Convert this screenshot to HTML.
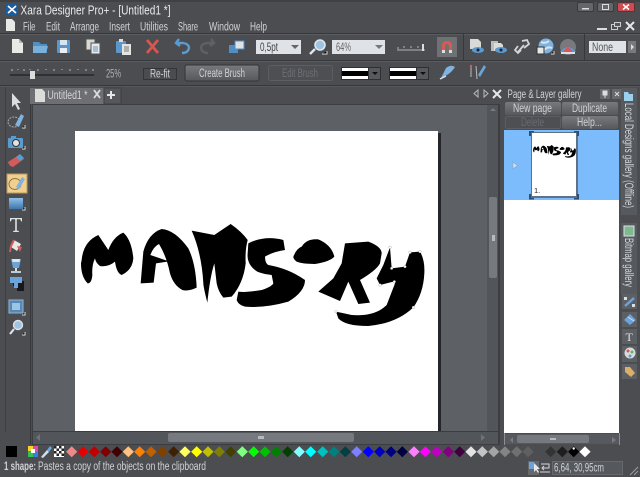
<!DOCTYPE html>
<html><head><meta charset="utf-8"><title>Xara Designer Pro+</title>
<style>
html,body{margin:0;padding:0;background:#4b4d51;overflow:hidden}
svg{display:block}
text{font-family:"Liberation Sans",sans-serif;fill:#d0d3d6;font-size:11.5px}
</style></head><body>
<svg width="640" height="477" viewBox="0 0 640 477" xmlns="http://www.w3.org/2000/svg">
<defs>
<g id="logo" fill="#000" transform="translate(75 220) scale(.33333)">
<path d="M20 120Q25 65 70 45L100 90Q115 50 145 38Q170 60 175 115Q172 150 140 165Q125 160 120 125Q100 142 75 138Q62 128 60 115Q50 135 52 165Q50 190 38 190Q18 170 18 130Z"/>
<path d="M197 190L205 95Q220 40 260 27Q300 30 340 85Q362 130 365 203Q340 215 322 210Q295 195 285 160Q275 110 252 72Q235 80 226 105L282 124L243 130L236 188Z"/>
<path d="M350 32L418 45Q440 30 467 12Q500 35 518 60Q510 90 512 130Q505 190 470 230L445 233Q430 215 425 190L418 130Q405 170 397 248Q385 200 385 190Q380 100 350 32Z"/>
<path d="M520 70Q570 45 625 60L630 90Q595 95 570 110Q570 130 580 135Q640 145 690 180Q690 215 640 245Q570 265 510 260Q490 255 485 240L490 215Q515 218 560 210Q590 200 595 190L590 165Q550 160 540 150Q515 130 518 100Z"/>
<path d="M655 110Q665 85 680 80Q695 55 730 58Q770 75 778 110Q765 125 720 132Q680 132 665 125Q655 118 655 110Z"/>
<path d="M810 70L880 65Q920 80 920 100L915 130Q905 150 855 180L885 248L850 252L820 185L795 243L730 215L775 175L800 130Z"/>
<path d="M783 275L830 285Q900 290 935 255L960 190L955 185L915 195L905 175L925 135L945 82L950 145L990 140L1005 97L1035 95Q1050 120 1048 160Q1045 220 1015 262Q965 310 880 318Q810 318 790 295Z"/>
</g>
<polygon id="d" points="0,-5.5 5.6,0 0,5.5 -5.6,0"/>
<linearGradient id="btn" x1="0" y1="0" x2="0" y2="1"><stop offset="0" stop-color="#77797d"/><stop offset="1" stop-color="#56585c"/></linearGradient>
<linearGradient id="bl" x1="0" y1="0" x2="0" y2="1"><stop offset="0" stop-color="#8fbfe8"/><stop offset="1" stop-color="#3f77ad"/></linearGradient>
</defs>

<!-- chrome -->
<rect width="640" height="477" fill="#4b4d51"/>
<rect width="640" height="2" fill="#3f4144"/>
<rect y="33" width="640" height="1" fill="#37383b"/><rect y="34" width="640" height="1" fill="#5a5c60"/>
<rect y="60" width="640" height="1" fill="#37383b"/><rect y="61" width="640" height="1" fill="#5a5c60"/>
<rect y="85" width="640" height="1" fill="#37383b"/><rect y="86" width="640" height="1" fill="#55575b"/>

<!-- title -->
<rect x="6" y="4" width="12" height="11" rx="1" fill="#1c5c9c"/>
<path d="M8 6L16 13M16 6L8 13" stroke="#fff" stroke-width="1.6"/>
<text x="20.500" y="14.500" textLength="150" lengthAdjust="spacingAndGlyphs" style="font-size:13px;fill:#e8eaec">Xara Designer Pro+ - [Untitled1 *]</text>
<rect x="577.500" y="2.500" width="16" height="9" rx="1.500" fill="#64666a" stroke="#393a3d"/><rect x="582" y="8" width="7" height="1.500" fill="#ddd"/>
<rect x="597.500" y="2.500" width="16" height="9" rx="1.500" fill="#64666a" stroke="#393a3d"/><rect x="602.500" y="4.500" width="6" height="5" fill="none" stroke="#ddd"/>
<rect x="617.500" y="2.500" width="17" height="9" rx="1.500" fill="#d04a52" stroke="#5d3336"/><path d="M623 4.500L629 9.500M629 4.500L623 9.500" stroke="#fff" stroke-width="1.500"/>

<!-- menu -->
<path d="M6 19H12L15 22V31H6Z" fill="#e8e8e6"/>
<g>
<text x="23" y="30.500" textLength="12.500" lengthAdjust="spacingAndGlyphs">File</text>
<text x="46" y="30.500" textLength="14" lengthAdjust="spacingAndGlyphs">Edit</text>
<text x="70" y="30.500" textLength="29" lengthAdjust="spacingAndGlyphs">Arrange</text>
<text x="109" y="30.500" textLength="21" lengthAdjust="spacingAndGlyphs">Insert</text>
<text x="140" y="30.500" textLength="28" lengthAdjust="spacingAndGlyphs">Utilities</text>
<text x="178" y="30.500" textLength="20" lengthAdjust="spacingAndGlyphs">Share</text>
<text x="209" y="30.500" textLength="31" lengthAdjust="spacingAndGlyphs">Window</text>
<text x="250" y="30.500" textLength="17" lengthAdjust="spacingAndGlyphs">Help</text>
</g>
<rect x="597" y="28" width="10" height="2" fill="#ddd"/>
<rect x="611.500" y="24.500" width="6" height="5" fill="none" stroke="#ccc"/><rect x="614.500" y="22.500" width="6" height="4" fill="#55575b" stroke="#ccc"/>
<path d="M626 22L634 30M634 22L626 30" stroke="#e6e6e6" stroke-width="2"/>

<!-- toolbar 1 -->
<path d="M12 39H19L23 43V53H12Z" fill="#e9e9e6"/><path d="M19 39V43H23" fill="#b9b9b6"/>
<path d="M33 42H39L41 44H47V53H33Z" fill="#4f8fc4"/><path d="M33 46H48L46 53H33Z" fill="#7ab1dc"/>
<rect x="57" y="40" width="13" height="13" rx="1" fill="#5b97cb"/><rect x="60" y="40" width="7" height="5" fill="#d8e4ee"/><rect x="60" y="48" width="7" height="5" fill="#e8eef2"/>
<rect x="86" y="39" width="9" height="11" fill="#d8d8d6" stroke="#555"/><rect x="91" y="43" width="9" height="11" fill="#e8e8e6" stroke="#555"/><path d="M93 47H98M93 49H98M93 51H98" stroke="#5b97cb"/>
<rect x="116" y="41" width="10" height="12" rx="1" fill="#5b97cb"/><rect x="119" y="39" width="4" height="3" fill="#ddd"/><rect x="122" y="44" width="9" height="11" fill="#e4e4e2"/><path d="M124 47H129M124 49H129M124 51H129" stroke="#777"/>
<path d="M147 40L158 53M158 40L147 53" stroke="#d9564e" stroke-width="2.800"/>
<path d="M179 39L176 43L180 46M177 43H183Q189 44 189 48Q188 53 182 53" fill="none" stroke="#5a9bd0" stroke-width="2.400"/>
<path d="M211 39L214 43L210 46M213 43H207Q201 44 201 48Q202 53 208 53" fill="none" stroke="#5e6064" stroke-width="2.400"/>
<rect x="229" y="45" width="9" height="8" fill="#4f8fc4"/><rect x="235" y="41" width="9" height="8" fill="#dfe3e6" stroke="#4f8fc4"/>
<rect x="256" y="40" width="45" height="14" fill="#dfe3e7"/><text x="260" y="51" textLength="18" lengthAdjust="spacingAndGlyphs" style="fill:#444">0,5pt</text><path d="M291 45H299L295 49Z" fill="#666"/>
<circle cx="320" cy="45" r="5" fill="#9cc5e5" stroke="#e0e6ea" stroke-width="1.600"/><path d="M315 49L310 54" stroke="#e0e6ea" stroke-width="2.400"/><path d="M322 54H327V51" stroke="#ddd"/>
<rect x="332" y="40" width="53" height="14" fill="#dfe3e7"/><text x="336" y="51" textLength="15" lengthAdjust="spacingAndGlyphs" style="fill:#666">64%</text><path d="M375 45H383L379 49Z" fill="#777"/>
<path d="M397 50H425M398 47V49M404 46V48M411 46V48M418 46V48" stroke="#b2b5b8"/><rect x="422" y="44" width="2" height="7" fill="#ddd"/>
<rect x="437" y="37" width="20" height="20" fill="#6f7175"/>
<path d="M442 53V46Q442 41 447 41Q452 41 452 46V53H449V46Q449 44 447 44Q445 44 445 46V53Z" fill="#d85b52"/><rect x="442" y="50" width="3" height="3" fill="#ddd"/><rect x="449" y="50" width="3" height="3" fill="#ddd"/>
<rect x="463" y="34" width="1" height="26" fill="#37383b"/>
<path d="M470 39H478L481 42V49H470Z" fill="#d9d9d7"/><ellipse cx="478" cy="50" rx="6" ry="3" fill="#5a9bd0"/><circle cx="478" cy="50" r="1.500" fill="#223"/>
<path d="M491 41H498V51H491Z" fill="#bdbdbb"/><path d="M494 43H501L503 45V51H494Z" fill="#dcdcda"/><ellipse cx="501" cy="50" rx="6" ry="3" fill="#5a9bd0"/><circle cx="501" cy="50" r="1.500" fill="#223"/>
<path d="M518 52L524 45M522 41L527 40L529 44L524 48M518 46L515 50L518 53L521 50" fill="none" stroke="#d3d6d9" stroke-width="1.800"/>
<circle cx="546" cy="46" r="7.500" fill="#7fb2de"/><path d="M541 42Q545 44 549 41M544 50Q548 46 552 48" stroke="#d9e6f0" fill="none" stroke-width="2"/><rect x="537" y="47" width="7" height="7" fill="#e8e8e8" stroke="#333"/><path d="M551 54H554V51" stroke="#ddd"/>
<circle cx="568" cy="47" r="8" fill="#77797d"/><path d="M560 52Q568 42 576 52Z" fill="#5a9bd0"/><path d="M563 52L568 46L573 52" fill="#d8555a"/><rect x="561" y="52" width="14" height="2" fill="#ddd"/>
<rect x="584" y="34" width="1" height="26" fill="#37383b"/>
<rect x="589" y="41" width="37" height="12" fill="#dfe3e7"/><text x="592" y="51" textLength="21" lengthAdjust="spacingAndGlyphs" style="fill:#555">None</text>
<rect x="628" y="41" width="8" height="12" fill="#77797d"/><path d="M631 44L634 47L631 50Z" fill="#ddd"/>

<!-- toolbar 2 -->
<path d="M12 69V71M18 69V70M24 69V71M30 69V70M38 69V71M46 69V70M54 69V71M62 69V70M70 69V71M78 69V70M86 69V71M93 69V71" stroke="#b5b8bb"/>
<rect x="10" y="74" width="84" height="2" fill="#2f3033"/><path d="M30 71H35V79H30Z" fill="#dcdcda"/>
<text x="106" y="77.500" textLength="15" lengthAdjust="spacingAndGlyphs" style="fill:#aeb1b5">25%</text>
<rect x="143.500" y="68.500" width="33" height="11" fill="#4a4c50" stroke="#333538"/><text x="150" y="77.500" textLength="20" lengthAdjust="spacingAndGlyphs">Re-fit</text>
<rect x="185" y="65" width="74" height="16" rx="2" fill="url(#btn)" stroke="#333538"/><text x="199" y="77" textLength="46" lengthAdjust="spacingAndGlyphs">Create Brush</text>
<rect x="268.500" y="65.500" width="64" height="15" rx="2" fill="#4d4f53" stroke="#5c5e62"/><text x="282" y="77" textLength="36" lengthAdjust="spacingAndGlyphs" style="fill:#6d7074">Edit Brush</text>
<rect x="341" y="67" width="40" height="13" fill="#2e2f32"/><rect x="342" y="68" width="26" height="11" fill="#fff"/><rect x="342" y="71" width="26" height="5" fill="#000"/><rect x="369" y="68" width="11" height="11" fill="#57595d"/><path d="M372 72H378L375 75Z" fill="#111"/>
<rect x="389" y="67" width="40" height="13" fill="#2e2f32"/><rect x="390" y="68" width="26" height="11" fill="#fff"/><rect x="390" y="71" width="26" height="5" fill="#000"/><rect x="417" y="68" width="11" height="11" fill="#57595d"/><path d="M420 72H426L423 75Z" fill="#111"/>
<path d="M441 78L446 68Q451 64 455 67Q452 72 447 75Z" fill="#7fb2de"/><path d="M440 79L446 76" stroke="#dde" stroke-width="1.500"/>
<path d="M471 66V77M476 66L477 79" stroke="#bbb"/><circle cx="471" cy="66" r="1.200" fill="#d85b52"/><path d="M478 75L484 65L486 67L480 77Z" fill="#6aa4da"/>

<!-- left toolbar -->
<rect x="5" y="87" width="1" height="345" fill="#3d3f42"/>
<path d="M12 93L12 107L15 104L18 110L20 109L17 103L21 103Z" fill="#dcdde0"/>
<ellipse cx="14" cy="122" rx="6" ry="5" fill="none" stroke="#aaa" stroke-dasharray="2 1"/><path d="M15 125L21 114L24 116L19 127Z" fill="#7fb2de"/><path d="M22 128H25V125" stroke="#ddd"/>
<rect x="8" y="138" width="15" height="10" rx="1" fill="#5a9bd0"/><rect x="11" y="136" width="5" height="3" fill="#5a9bd0"/><circle cx="16" cy="143" r="3.500" fill="#dfe3e6" stroke="#333"/><path d="M22 149H25V146" stroke="#ddd"/>
<path d="M8 162L19 155L24 159L13 167Q9 166 8 162Z" fill="#d55a5a"/><path d="M16 157L20 154L24 158L20 161Z" fill="#5a9bd0"/>
<rect x="7" y="174" width="20" height="19" fill="#f1d08f" stroke="#b89a5e"/>
<ellipse cx="15" cy="184" rx="6" ry="5.500" fill="none" stroke="#8b7a50"/><path d="M16 187L22 177L25 179L19 189Z" fill="#7fb2de"/>
<rect x="9" y="198" width="14" height="11" fill="url(#bl)"/><path d="M22 210H25V207" stroke="#ddd"/>
<path d="M10 218H22V221.500H21.200L20.300 219.300H16.800V230.800H18.800V232H13.200V230.800H15.200V219.300H11.700L10.800 221.500H10Z" fill="#e0e2e4"/>
<path d="M14 240L21 244L17 251L11 247Z" fill="#e8e8e6"/><path d="M14 240L11 246L10 252" fill="none" stroke="#d55a5a" stroke-width="2"/><path d="M17 246L22 247L20 252Z" fill="#d55a5a"/>
<path d="M11 259H21L19 268H13Z" fill="#6aa4da"/><path d="M12 259H20L19.500 262H12.500Z" fill="#dfe3e6"/><rect x="15" y="268" width="2" height="4" fill="#ddd"/><rect x="11" y="271" width="10" height="2" fill="#bcd"/>
<path d="M13 281H24V291H17V286H13Z" fill="#16181c"/><path d="M10 277H22V283H18V288H14V283H10Z" fill="#6aa4da"/>
<rect x="9" y="300" width="14" height="13" fill="#5a87b0" stroke="#8fb4d6"/><rect x="12" y="303" width="8" height="7" fill="#9cc5e5"/><path d="M22 315H25V312" stroke="#ddd"/>
<circle cx="18" cy="325" r="4.500" fill="#9cc5e5" stroke="#e0e2e4" stroke-width="1.400"/><path d="M14 329L10 334" stroke="#e0e2e4" stroke-width="2.200"/><path d="M22 335H25V332" stroke="#ddd"/>

<!-- document frame -->
<rect x="30" y="104" width="1" height="340" fill="#37383b"/>
<rect x="30" y="88" width="74" height="16" fill="#6d6f73"/>
<path d="M35 89H42L45 92V102H35Z" fill="#dcdcda"/>
<text x="47.500" y="99" textLength="40" lengthAdjust="spacingAndGlyphs" style="fill:#d4d6d8">Untitled1 *</text>
<path d="M94 90L100 98M100 90L94 98" stroke="#dcdde0" stroke-width="1.800"/>
<rect x="104" y="88" width="17" height="16" fill="#55575b" stroke="#3d3f42"/><path d="M111 91V99M107 95H115" stroke="#e6e6e6" stroke-width="2"/>
<path d="M478 90L474 93.500L478 97Z" fill="none" stroke="#b8babd"/><path d="M484 90L488 93.500L484 97Z" fill="none" stroke="#b8babd"/>
<path d="M493 90L501 98M501 90L493 98" stroke="#e6e6e6" stroke-width="2"/>

<!-- canvas -->
<rect x="32" y="104" width="468" height="341" fill="#3c3d40"/>
<rect x="33" y="105" width="454" height="326" fill="#5d6064"/>
<rect x="75" y="131" width="363" height="300" fill="#fff"/>
<rect x="438" y="133" width="3" height="298" fill="#24252a"/>
<use href="#logo"/>
<g fill="#fff" stroke="#444" stroke-width=".6" transform="translate(75 220) scale(.33333)"><circle cx="945" cy="82" r="4"/><circle cx="1005" cy="97" r="4"/><circle cx="1035" cy="95" r="4"/><circle cx="950" cy="145" r="4"/><circle cx="990" cy="140" r="4"/><circle cx="915" cy="195" r="4"/><circle cx="958" cy="185" r="4"/><circle cx="1015" cy="262" r="4"/><circle cx="783" cy="275" r="4"/></g>

<!-- v scrollbar -->
<rect x="487" y="105" width="11" height="326" fill="#525559"/>
<path d="M490 111H496L493 108Z" fill="#777a7e"/>
<rect x="489" y="197" width="8" height="81" rx="2" fill="#76797d"/>
<rect x="492" y="235" width="3" height="6" fill="#b7babd"/>
<!-- h scrollbar -->
<rect x="33" y="432" width="465" height="12" fill="#525559"/>
<path d="M40 434V441L36 437.500Z" fill="#6f7276"/>
<path d="M481 434V441L485 437.500Z" fill="#6f7276"/>
<rect x="168" y="433" width="186" height="9" rx="2" fill="#76797d"/>
<rect x="258" y="436" width="6" height="3" fill="#b7babd"/>

<!-- gallery -->
<text x="507.500" y="98" textLength="74" lengthAdjust="spacingAndGlyphs">Page &amp; Layer gallery</text>
<rect x="600" y="89" width="10" height="10" fill="#66686c"/><path d="M603 91H607V95H603ZM605 95V98" stroke="#ddd" fill="#ddd"/>
<rect x="612" y="89" width="10" height="10" fill="#66686c"/><path d="M615 92L619 96M619 92L615 96" stroke="#ddd"/>
<rect x="505" y="102" width="56" height="13" rx="2" fill="url(#btn)"/><text x="513" y="112" textLength="39" lengthAdjust="spacingAndGlyphs">New  page</text>
<rect x="562" y="102" width="56" height="13" rx="2" fill="url(#btn)"/><text x="572" y="112" textLength="35" lengthAdjust="spacingAndGlyphs">Duplicate</text>
<rect x="505.500" y="116.500" width="55" height="12" rx="2" fill="#4d4f53" stroke="#5c5e62"/><text x="521" y="126" textLength="23" lengthAdjust="spacingAndGlyphs" style="fill:#686b6f">Delete</text>
<rect x="562" y="116" width="56" height="13" rx="2" fill="url(#btn)"/><text x="577" y="126" textLength="25" lengthAdjust="spacingAndGlyphs">Help...</text>
<rect x="504" y="130" width="115" height="303" fill="#fff"/>
<rect x="504" y="130" width="115" height="70" fill="#7dbcfc"/>
<path d="M513 162V169L517.500 165.500Z" fill="#cfe2f2" stroke="#8aa0b5" stroke-width=".6"/>
<rect x="531" y="132" width="47" height="66" fill="#5d7188"/>
<rect x="532" y="133" width="44" height="63" fill="#fff"/>
<use href="#logo" transform="translate(522.900 117) scale(.125)"/>
<text x="534" y="193" style="font-size:7.500px;fill:#222">1.</text>
<g fill="#2d4f78"><rect x="529" y="131" width="2" height="5"/><rect x="529" y="131" width="5" height="1.500"/><rect x="577" y="131" width="2" height="5"/><rect x="574" y="131" width="5" height="1.500"/><rect x="529" y="194" width="2" height="5"/><rect x="529" y="198" width="5" height="1.500"/><rect x="577" y="194" width="2" height="5"/><rect x="574" y="198" width="5" height="1.500"/></g>
<rect x="504" y="433" width="1" height="12" fill="#8c8e92"/><rect x="619" y="433" width="1" height="12" fill="#8c8e92"/>
<rect x="505" y="434" width="114" height="10" fill="#56595d"/>
<path d="M513 437V443L510 440Z" fill="#7a7d81"/><path d="M612 437V443L616 440Z" fill="#7a7d81"/>
<rect x="517" y="435" width="72" height="8" rx="2" fill="#76797d"/><rect x="550" y="438" width="6" height="2" fill="#b7babd"/>

<!-- right side tabs -->
<rect x="621" y="88" width="16" height="127" fill="#565a5e"/>
<path d="M624 92H628L629 94H633V101H624Z" fill="#9ad0ee"/>
<text transform="translate(625 103) rotate(90)" textLength="105" lengthAdjust="spacingAndGlyphs" style="fill:#d6d8da">Local Designs gallery (Offline)</text>
<rect x="621" y="223" width="16" height="72" fill="#565a5e"/>
<rect x="624" y="226" width="10" height="10" fill="#7fb98f" stroke="#dde"/>
<text transform="translate(625 238) rotate(90)" textLength="49" lengthAdjust="spacingAndGlyphs" style="fill:#d6d8da">Bitmap gallery</text>
<rect x="622" y="294" width="15" height="15" fill="#5c5f63"/><path d="M625 306L634 298" stroke="#6aa4da" stroke-width="2.500"/><rect x="624" y="297" width="3" height="3" fill="#ddd"/><rect x="632" y="304" width="3" height="3" fill="#ddd"/>
<rect x="622" y="312" width="15" height="15" fill="#5c5f63"/><path d="M624 320L630 314L636 320L630 325Z" fill="#6aa4da"/><path d="M628 317L634 321" stroke="#dde"/>
<rect x="622" y="329" width="15" height="15" fill="#5c5f63"/><text x="625.500" y="341" style="font-size:12px;fill:#e0e0e0;font-family:'Liberation Serif',serif">T</text>
<rect x="622" y="346" width="15" height="16" fill="#5c5f63"/><circle cx="630" cy="353" r="5.500" fill="#d9dcdc"/><circle cx="628" cy="351" r="1.500" fill="#d55a5a"/><circle cx="632" cy="352" r="1.500" fill="#5fb56a"/><circle cx="630" cy="356" r="1.500" fill="#5a9bd0"/>
<rect x="622" y="364" width="15" height="15" fill="#5c5f63"/><path d="M625 367H630L635 373L631 377L625 372Z" fill="#d9b06a"/>

<!-- palette -->
<rect x="6" y="446" width="11" height="11" fill="#000"/>
<rect x="28" y="446" width="10" height="11" fill="#d84ea0"/><rect x="28" y="446" width="5" height="5" fill="#f4d030"/><rect x="33" y="452" width="5" height="5" fill="#3a7ee0"/><rect x="28" y="452" width="5" height="5" fill="#38c058"/><rect x="31" y="449" width="4" height="4" fill="#fff"/>
<path d="M41 457L47 450L49 452L43 458Z" fill="#cfe0ee"/><path d="M47 450L50 446L52 448L49 452Z" fill="#6aa4da"/>
<rect x="54" y="446" width="10" height="11" fill="#fff"/>
<path d="M54 446h2.500v2.500h-2.500zM59 446h2.500v2.500h-2.500zM56.500 448.500h2.500v2.500h-2.500zM61.500 448.500h2.500v2.500h-2.500zM54 451h2.500v2.500h-2.500zM59 451h2.500v2.500h-2.500zM56.500 453.500h2.500v2.500h-2.500zM61.500 453.500h2.500v2.500h-2.500z" fill="#222"/>
<g transform="translate(0 451.700)">
<use href="#d" x="71.700" fill="#f08888"/><use href="#d" x="83" fill="#e80000"/><use href="#d" x="94.300" fill="#c00000"/><use href="#d" x="105.700" fill="#800000"/><use href="#d" x="117" fill="#400000"/>
<use href="#d" x="128.300" fill="#ffc080"/><use href="#d" x="139.700" fill="#ff8000"/><use href="#d" x="151" fill="#c06000"/><use href="#d" x="162.300" fill="#804000"/><use href="#d" x="173.700" fill="#402000"/>
<use href="#d" x="185" fill="#ffff60"/><use href="#d" x="196.700" fill="#ffff00"/><use href="#d" x="208" fill="#c0c000"/><use href="#d" x="219.300" fill="#808000"/><use href="#d" x="230.700" fill="#404000"/>
<use href="#d" x="242.300" fill="#80ff80"/><use href="#d" x="253.700" fill="#00ff00"/><use href="#d" x="265" fill="#00c000"/><use href="#d" x="276.300" fill="#008000"/><use href="#d" x="287.700" fill="#004000"/>
<use href="#d" x="299.300" fill="#80ffff"/><use href="#d" x="310.700" fill="#00ffff"/><use href="#d" x="322.700" fill="#00c0c0"/><use href="#d" x="334" fill="#008080"/><use href="#d" x="345.300" fill="#004040"/>
<use href="#d" x="356.700" fill="#8080ff"/><use href="#d" x="368.300" fill="#0000ff"/><use href="#d" x="379.700" fill="#0000c0"/><use href="#d" x="391" fill="#000080"/><use href="#d" x="402.300" fill="#000040"/>
<use href="#d" x="414" fill="#ff80ff"/><use href="#d" x="425.300" fill="#ff00ff"/><use href="#d" x="436.700" fill="#c000c0"/><use href="#d" x="448.300" fill="#800080"/><use href="#d" x="459.700" fill="#400040"/>
<use href="#d" x="471" fill="#e4e4e4"/><use href="#d" x="482.300" fill="#c4c4c4"/><use href="#d" x="493.700" fill="#a4a4a4"/><use href="#d" x="505" fill="#848484"/><use href="#d" x="516.700" fill="#707070"/>
<use href="#d" x="528" fill="#606060"/><use href="#d" x="550.700" fill="#343434"/><use href="#d" x="562.300" fill="#1e1e1e"/><use href="#d" x="573.700" fill="#000"/><use href="#d" x="585" fill="#fff"/>
</g>
<circle cx="573.700" cy="448.500" r="1.200" fill="#fff"/>

<!-- status -->
<text x="4" y="470" textLength="32" lengthAdjust="spacingAndGlyphs" style="font-weight:bold">1 shape:</text>
<text x="38" y="470" textLength="168" lengthAdjust="spacingAndGlyphs">Pastes a copy of the objects on the clipboard</text>
<rect x="528" y="461" width="11" height="14" fill="#66686c"/><rect x="529" y="462" width="5" height="7" fill="#6aa4da"/><path d="M534 463V472L536 470L538 473L539 472L537 469H540Z" fill="#e8e8e8"/>
<path d="M541 464H549V468H543M544 466L542 468L544 470M540 472H550" fill="none" stroke="#d6d8da"/>
<rect x="552.500" y="461.500" width="70" height="13" fill="#55585c" stroke="#66686c"/>
<text x="554" y="471.500" textLength="50" lengthAdjust="spacingAndGlyphs">6,64, 30,95cm</text>
<path d="M630 475L638 467M634 475L638 471" stroke="#9a9da0"/>
</svg>
</body></html>
